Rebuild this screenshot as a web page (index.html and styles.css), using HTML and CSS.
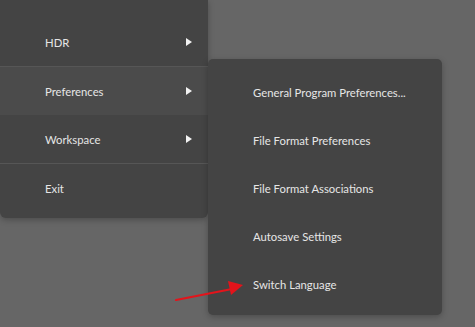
FILE: index.html
```html
<!DOCTYPE html>
<html lang="en">
<head>
    <meta charset="UTF-8">
    <title>Menu</title>
    <link rel="stylesheet" href="styles.css">
</head>
<body>
    <div class="screen">
        <div class="menu main-menu">
            <div class="item">HDR <span class="caret"></span></div>
            <div class="sep"></div>
            <div class="item active">Preferences <span class="caret"></span></div>
            <div class="item">Workspace <span class="caret"></span></div>
            <div class="sep"></div>
            <div class="item">Exit</div>
        </div>
        <div class="menu sub-menu">
            <div class="item">General Program Preferences...</div>
            <div class="item">File Format Preferences</div>
            <div class="item">File Format Associations</div>
            <div class="item">Autosave Settings</div>
            <div class="item">Switch Language</div>
        </div>
        <svg class="pointer" width="80" height="30" viewBox="0 0 80 30">
            <line x1="4" y1="27" x2="60" y2="16" stroke="#e3141b" stroke-width="2.2" stroke-linecap="round"/>
            <polygon points="71,12 56,8 59,22" fill="#e3141b"/>
        </svg>
    </div>
</body>
</html>
```

FILE: styles.css
```css
body { margin: 0; background: #666666; font-family: Lato, 'Open Sans', sans-serif; font-size: 11.3px; color: #e6e6e6; overflow: hidden; }
.screen { position: relative; display: flex; align-items: flex-start; width: 475px; height: 327px; }
.menu { background: #444444; box-shadow: 0 2px 6px rgba(0, 0, 0, 0.25); }
.main-menu { width: 208px; padding: 18px 0 6px; border-radius: 0 0 6px 6px; }
.sub-menu { width: 234px; margin-top: 59px; padding: 9px 0 7px; border-radius: 5px; }
.item { display: flex; align-items: center; justify-content: space-between; height: 48px; padding: 0 16px 0 45px; white-space: nowrap; }
.item.active { background: #4b4b4b; }
.sep { height: 1px; background: #565656; }
.caret { width: 0; height: 0; border-top: 4.5px solid transparent; border-bottom: 4.5px solid transparent; border-left: 6px solid #f2f2f2; }
.pointer { position: absolute; left: 172px; top: 273px; }
```
